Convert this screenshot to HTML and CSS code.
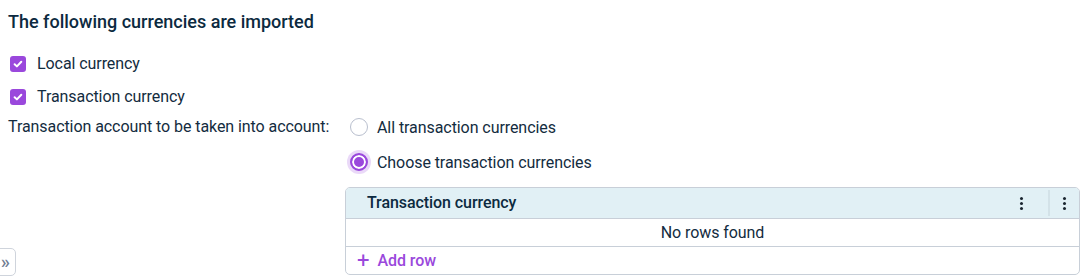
FILE: index.html
```html
<!DOCTYPE html>
<html>
<head>
<meta charset="utf-8">
<title>Currency import</title>
<link rel="stylesheet" href="styles.css">
</head>
<body>
<div class="page">
	<h3 class="title">The following currencies are imported</h3>

	<label class="chk_row"><span class="chk"><svg viewBox="0 0 16 16" width="16" height="16"><path d="M4.6 8.2l2.3 2.2 4.4-4.6" fill="none" stroke="#fff" stroke-width="2" stroke-linecap="round" stroke-linejoin="round"/></svg></span>Local currency</label>
	<label class="chk_row"><span class="chk"><svg viewBox="0 0 16 16" width="16" height="16"><path d="M4.6 8.2l2.3 2.2 4.4-4.6" fill="none" stroke="#fff" stroke-width="2" stroke-linecap="round" stroke-linejoin="round"/></svg></span>Transaction currency</label>

	<div class="form_row">
		<div class="form_label">Transaction account to be taken into account:</div>
		<div class="form_field">
			<label class="radio_row"><span class="radio"></span>All transaction currencies</label>
			<label class="radio_row"><span class="radio radio_on"></span>Choose transaction currencies</label>

			<div class="grid">
				<div class="grid_head">
					<div class="grid_title">Transaction currency</div>
					<div class="grid_menu"><i class="kebab"></i></div>
					<div class="grid_menu grid_menu_last"><i class="kebab"></i></div>
				</div>
				<div class="grid_empty">No rows found</div>
				<div class="grid_foot"><span class="plus">+</span>Add row</div>
			</div>
		</div>
	</div>
</div>
<div class="side_toggle">»</div>
</body>
</html>
```

FILE: styles.css
```css
body {
	margin:0;
	background:#fff;
	font-family:Roboto, "Liberation Sans", sans-serif;
	font-size:16px;
	letter-spacing:-0.07px;
	color:#132c40;
}
.page { padding:0 5px 0 8px; }
.title {
	margin:0;
	padding:10px 0 13px;
	font-size:18px;
	line-height:24px;
	font-weight:500;
	letter-spacing:0;
	color:#0c2a40;
}
.chk_row {
	display:flex;
	align-items:center;
	height:33px;
	padding-left:2px;
}
.chk {
	width:16px;
	height:16px;
	border-radius:3px;
	background:#9a48dc;
	margin-right:11px;
	display:flex;
}
.form_row { display:flex; }
.form_label {
	width:337px;
	line-height:28px;
}
.form_field { flex:1; }
.radio_row {
	display:flex;
	align-items:center;
	height:28px;
	margin-bottom:7px;
	padding-left:5px;
}
.radio {
	box-sizing:border-box;
	width:18px;
	height:18px;
	border:1px solid #b9bfce;
	border-radius:50%;
	background:#fff;
	margin-right:9px;
}
.radio_on {
	border:2px solid #9a48dc;
	background:#9a48dc;
	box-shadow:inset 0 0 0 2px #fff, 0 0 0 3px #ead9f8;
}
.grid {
	margin-top:11px;
	border:1px solid #c8cfd8;
	border-radius:5px;
	overflow:hidden;
}
.grid_head {
	display:flex;
	height:30px;
	background:#e1f0f5;
	border-bottom:1px solid #c8cfd8;
	font-weight:500;
	color:#0c2a40;
}
.grid_title {
	flex:1;
	padding-left:21px;
	line-height:30px;
}
.grid_menu {
	width:42px;
	padding-right:6px;
	display:flex;
	align-items:center;
	justify-content:center;
}
.grid_menu_last {
	width:29px;
	padding-right:0;
	border-left:2px solid #d3e2e8;
	margin:2px 0;
}
.kebab {
	width:3px;
	height:3px;
	border-radius:50%;
	background:#1a2530;
	box-shadow:0 -5px 0 #1a2530, 0 5px 0 #1a2530;
}
.grid_empty {
	height:27px;
	line-height:27px;
	text-align:center;
	border-bottom:1px solid #c8cfd8;
}
.grid_foot {
	height:27px;
	line-height:27px;
	padding-left:11px;
	color:#9a48dc;
	font-weight:500;
}
.plus {
	font-size:22px;
	font-weight:400;
	margin-right:8px;
	vertical-align:-2px;
}
.side_toggle {
	position:absolute;
	left:-6px;
	top:248px;
	box-sizing:border-box;
	width:22px;
	height:28px;
	border:1px solid #cfd4dc;
	border-radius:5px;
	background:#fff;
	color:#6f7d92;
	font-size:19px;
	font-weight:500;
	line-height:25px;
	text-align:right;
	padding-right:5px;
}
```
